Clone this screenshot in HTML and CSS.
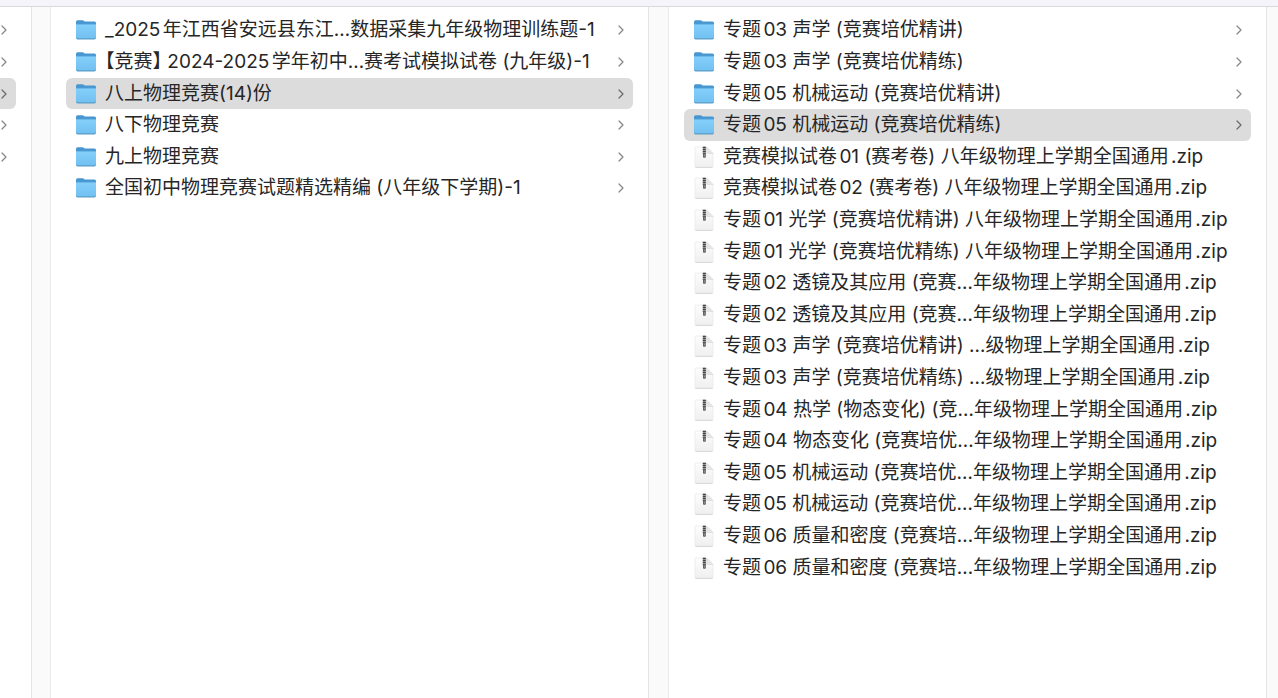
FILE: index.html
```
<!DOCTYPE html>
<html lang="zh-CN">
<head>
<meta charset="UTF-8">
<title>八上物理竞赛(14)份</title>
<link rel="stylesheet" href="styles.css">
</head>
<body>
<svg class="symbols" aria-hidden="true">
  <defs>
    <linearGradient id="folder-face" x1="0" y1="0" x2="0" y2="1">
      <stop offset="0" stop-color="#85cffa"/>
      <stop offset="1" stop-color="#72c1f2"/>
    </linearGradient>
    <linearGradient id="paper" x1="0" y1="0" x2="0" y2="1">
      <stop offset="0" stop-color="#fdfdfd"/>
      <stop offset="1" stop-color="#efefef"/>
    </linearGradient>
  </defs>
  <symbol id="folder" viewBox="0 0 22 22">
    <path d="M1 3Q1 1.2 2.6 1.2H7.6Q8.4 1.2 9 1.9L9.7 2.5H19.6Q21 2.5 21 4V8H1Z" fill="#4796d0"/>
    <path d="M1 5H21V18.5Q21 20.4 19.4 20.4H2.6Q1 20.4 1 18.5Z" fill="#5a9dc6"/>
    <path d="M1 5H21V17.8Q21 19.2 19.4 19.2H2.6Q1 19.2 1 17.8Z" fill="url(#folder-face)"/>
    <path d="M1 5.4H21" stroke="#68b6e8"/>
  </symbol>
  <symbol id="zip" viewBox="0 0 22 22">
    <path d="M3 1H13.5L20 7.5V20Q20 21.5 18.5 21.5H3.5Q2 21.5 2 20V2Q2 1 3 1Z" fill="url(#paper)" stroke="#e8e8e8" stroke-width=".7"/>
    <path d="M2.4 21.4H19.6" stroke="#d2d2d2" stroke-width=".8"/>
    <path d="M13.5 1V6Q13.5 7.5 15 7.5H20Z" fill="#e6e6e6" stroke="#d8d8d8" stroke-width=".6"/>
    <path d="M11.3 .8V8" stroke="#aaa" stroke-width="3"/>
    <path d="M11.3 .8V8" stroke="#444" stroke-width="3" stroke-dasharray="1.2 .8"/>
    <rect x="10" y="7" width="2.8" height="4.8" rx=".8" fill="#606060"/>
    <path d="M11.4 8.5V10.5" stroke="#aaa" stroke-width=".7"/>
  </symbol>
  <symbol id="chevron" viewBox="0 0 6 10">
    <path d="M1 1L5 5L1 9" fill="none" stroke="currentColor" stroke-width="1.2" stroke-linecap="round" stroke-linejoin="round"/>
  </symbol>
</svg>

<header class="toolbar"></header>
<main class="browser">
  <ul class="column column-parent">
    <li><a class="row" href="#" aria-label="1"><svg class="chevron"><use href="#chevron"/></svg></a></li>
    <li><a class="row" href="#" aria-label="2"><svg class="chevron"><use href="#chevron"/></svg></a></li>
    <li><a class="row selected" href="#" aria-label="3"><svg class="chevron"><use href="#chevron"/></svg></a></li>
    <li><a class="row" href="#" aria-label="4"><svg class="chevron"><use href="#chevron"/></svg></a></li>
    <li><a class="row" href="#" aria-label="5"><svg class="chevron"><use href="#chevron"/></svg></a></li>
  </ul>
  <div class="gutter"></div>
  <ul class="column">
    <li><a class="row" href="#"><svg class="icon"><use href="#folder"/></svg><span class="name">_2025年江西省安远县东江…数据采集九年级物理训练题-1</span><svg class="chevron"><use href="#chevron"/></svg></a></li>
    <li><a class="row" href="#"><svg class="icon"><use href="#folder"/></svg><span class="name">【竞赛】 2024-2025学年初中…赛考试模拟试卷 (九年级)-1</span><svg class="chevron"><use href="#chevron"/></svg></a></li>
    <li><a class="row selected" href="#"><svg class="icon"><use href="#folder"/></svg><span class="name">八上物理竞赛(14)份</span><svg class="chevron"><use href="#chevron"/></svg></a></li>
    <li><a class="row" href="#"><svg class="icon"><use href="#folder"/></svg><span class="name">八下物理竞赛</span><svg class="chevron"><use href="#chevron"/></svg></a></li>
    <li><a class="row" href="#"><svg class="icon"><use href="#folder"/></svg><span class="name">九上物理竞赛</span><svg class="chevron"><use href="#chevron"/></svg></a></li>
    <li><a class="row" href="#"><svg class="icon"><use href="#folder"/></svg><span class="name">全国初中物理竞赛试题精选精编 (八年级下学期)-1</span><svg class="chevron"><use href="#chevron"/></svg></a></li>
  </ul>
  <div class="gutter"></div>
  <ul class="column">
    <li><a class="row" href="#"><svg class="icon"><use href="#folder"/></svg><span class="name">专题03 声学 (竞赛培优精讲)</span><svg class="chevron"><use href="#chevron"/></svg></a></li>
    <li><a class="row" href="#"><svg class="icon"><use href="#folder"/></svg><span class="name">专题03 声学 (竞赛培优精练)</span><svg class="chevron"><use href="#chevron"/></svg></a></li>
    <li><a class="row" href="#"><svg class="icon"><use href="#folder"/></svg><span class="name">专题05 机械运动 (竞赛培优精讲)</span><svg class="chevron"><use href="#chevron"/></svg></a></li>
    <li><a class="row selected" href="#"><svg class="icon"><use href="#folder"/></svg><span class="name">专题05 机械运动 (竞赛培优精练)</span><svg class="chevron"><use href="#chevron"/></svg></a></li>
    <li><a class="row" href="#"><svg class="icon"><use href="#zip"/></svg><span class="name">竞赛模拟试卷01 (赛考卷) 八年级物理上学期全国通用.zip</span></a></li>
    <li><a class="row" href="#"><svg class="icon"><use href="#zip"/></svg><span class="name">竞赛模拟试卷02 (赛考卷) 八年级物理上学期全国通用.zip</span></a></li>
    <li><a class="row" href="#"><svg class="icon"><use href="#zip"/></svg><span class="name">专题01 光学 (竞赛培优精讲) 八年级物理上学期全国通用.zip</span></a></li>
    <li><a class="row" href="#"><svg class="icon"><use href="#zip"/></svg><span class="name">专题01 光学 (竞赛培优精练) 八年级物理上学期全国通用.zip</span></a></li>
    <li><a class="row" href="#"><svg class="icon"><use href="#zip"/></svg><span class="name">专题02 透镜及其应用 (竞赛…年级物理上学期全国通用.zip</span></a></li>
    <li><a class="row" href="#"><svg class="icon"><use href="#zip"/></svg><span class="name">专题02 透镜及其应用 (竞赛…年级物理上学期全国通用.zip</span></a></li>
    <li><a class="row" href="#"><svg class="icon"><use href="#zip"/></svg><span class="name">专题03 声学 (竞赛培优精讲) …级物理上学期全国通用.zip</span></a></li>
    <li><a class="row" href="#"><svg class="icon"><use href="#zip"/></svg><span class="name">专题03 声学 (竞赛培优精练) …级物理上学期全国通用.zip</span></a></li>
    <li><a class="row" href="#"><svg class="icon"><use href="#zip"/></svg><span class="name">专题04 热学 (物态变化) (竞…年级物理上学期全国通用.zip</span></a></li>
    <li><a class="row" href="#"><svg class="icon"><use href="#zip"/></svg><span class="name">专题04 物态变化 (竞赛培优…年级物理上学期全国通用.zip</span></a></li>
    <li><a class="row" href="#"><svg class="icon"><use href="#zip"/></svg><span class="name">专题05 机械运动 (竞赛培优…年级物理上学期全国通用.zip</span></a></li>
    <li><a class="row" href="#"><svg class="icon"><use href="#zip"/></svg><span class="name">专题05 机械运动 (竞赛培优…年级物理上学期全国通用.zip</span></a></li>
    <li><a class="row" href="#"><svg class="icon"><use href="#zip"/></svg><span class="name">专题06 质量和密度 (竞赛培…年级物理上学期全国通用.zip</span></a></li>
    <li><a class="row" href="#"><svg class="icon"><use href="#zip"/></svg><span class="name">专题06 质量和密度 (竞赛培…年级物理上学期全国通用.zip</span></a></li>
  </ul>
  <div class="gutter"></div>
</main>
</body>
</html>
```
FILE: styles.css
```
* { box-sizing: border-box; }
body { margin: 0; min-height: 100vh; display: flex; flex-direction: column; background: #fff; color: #262626; font-family: Inter, "Noto Sans CJK SC", sans-serif; font-size: 19px; }
.symbols { position: absolute; width: 0; height: 0; }
.toolbar { height: 7px; background: #f5f4fa; border-bottom: 1px solid #d9d8dc; }
.browser { flex: 1; display: grid; grid-template-columns: 31px 20px 1fr 21px 1fr 12px; }
.gutter { background: #fafafa; border-left: 1px solid #e4e4e4; border-right: 1px solid #ebebeb; }
.gutter:last-child { border-right: none; }

.column { min-width: 0; margin: 0; padding: 7px 15px; list-style: none; }
.column li { height: 32px; }
.column li:nth-child(5n+3), .column li:nth-child(5n) { height: 31px; }
.row { display: flex; align-items: center; gap: 8px; height: 100%; padding: 0 9px; border-radius: 6px; color: inherit; text-decoration: none; }
.selected { background: #dcdcdc; }
.name { flex: 1; min-width: 0; line-height: 30px; white-space: nowrap; text-autospace: normal; font-feature-settings: "halt"; }
.icon { flex: none; width: 22px; height: 22px; }
.chevron { flex: none; width: 6px; height: 10px; color: #858585; }
.selected .chevron { color: #6a6a6a; }

/* only the tail of the parent column is in view */
.column-parent { padding-left: 0; }
.column-parent .row { justify-content: flex-end; padding-left: 0; border-radius: 0 6px 6px 0; }
```
